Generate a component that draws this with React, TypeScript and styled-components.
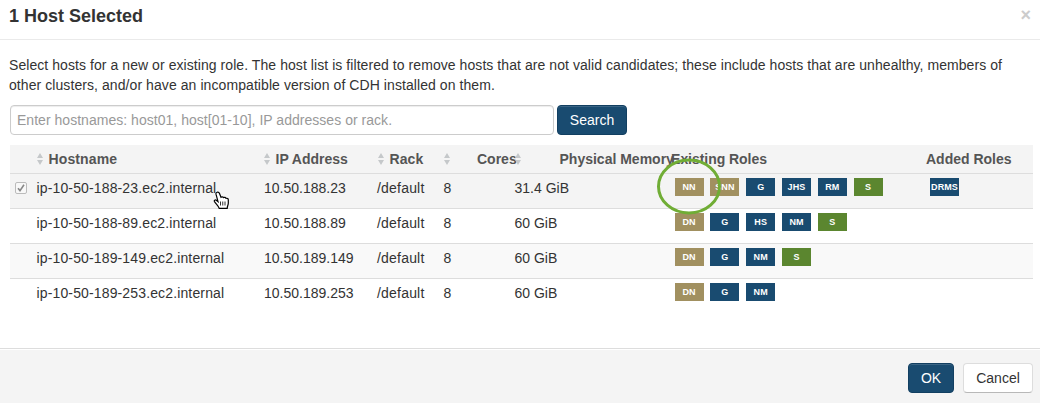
import React from "react";
import styled, { createGlobalStyle, css } from "styled-components";

const GlobalStyle = createGlobalStyle`
  * { box-sizing: border-box; }
  body {
    margin: 0;
    background: #fff;
    color: #333;
    font: 14px/20px "Liberation Sans", Arial, sans-serif;
  }
`;

const Modal = styled.div`
  display: flex;
  flex-direction: column;
  width: 1040px;
  height: 403px;
  overflow: hidden;
  position: relative;
`;

const Header = styled.header`
  display: flex;
  justify-content: space-between;
  height: 40px;
  padding: 6px 9px 0 9px;
  border-bottom: 1px solid #eaeaea;
`;

const Title = styled.h3`
  margin: 0;
  font-size: 18px;
  line-height: 20px;
  letter-spacing: 0;
`;

const Close = styled.button`
  height: 18px;
  padding: 0;
  border: 0;
  background: none;
  color: #ccc;
  font: bold 18px/18px "Liberation Sans", Arial, sans-serif;
`;

const Body = styled.main`
  flex: 1;
  padding: 15px 7px 0 10px;
`;

const Intro = styled.p`
  margin: 0 0 10px -1px;
  white-space: nowrap;
`;

const Line = styled.span<{ $spacing: number }>`
  display: block;
  letter-spacing: ${(p) => p.$spacing}px;
`;

const SearchRow = styled.div`
  display: flex;
  gap: 3px;
  height: 30px;
  margin-bottom: 10px;
`;

const SearchInput = styled.input`
  width: 544px;
  height: 30px;
  padding: 0 6px;
  border: 1px solid #ccc;
  border-radius: 4px;
  box-shadow: inset 0 1px 1px rgba(0, 0, 0, 0.075);
  font: 14px/20px "Liberation Sans", Arial, sans-serif;
  letter-spacing: 0.03px;
  &::placeholder { color: #999; opacity: 1; }
`;

const Button = styled.button<{ $primary?: boolean; $width: number }>`
  width: ${(p) => p.$width}px;
  height: 30px;
  padding: 0;
  border-radius: 4px;
  font: 14px/20px "Liberation Sans", Arial, sans-serif;
  letter-spacing: 0;
  ${(p) =>
    p.$primary
      ? css`
          color: #fff;
          background: #194b70;
          border: 1px solid #123f61;
          box-shadow: inset 0 1px 0 rgba(255, 255, 255, 0.15);
        `
      : css`
          color: #333;
          background: #fff;
          border: 1px solid #ddd;
          border-bottom-color: #b8b8b8;
        `}
`;

const columns = "26px 228px 113px 66px 71px 160.6px 255.4px 1fr";

const HeadRow = styled.div`
  display: grid;
  grid-template-columns: ${columns};
  height: 29px;
  background: #f4f4f4;
  border-bottom: 1px solid #ddd;
`;

const HeadCell = styled.div<{ $indent?: number; $spacing?: number }>`
  display: flex;
  align-items: center;
  gap: 5.5px;
  min-width: 0;
  padding-left: ${(p) => p.$indent ?? 0}px;
  color: #555;
  font-weight: bold;
  white-space: nowrap;
  letter-spacing: ${(p) => p.$spacing ?? 0.1}px;
`;

const HeadLabel = styled.span<{ $offset?: number }>`
  margin-left: ${(p) => p.$offset ?? 0}px;
`;

const Row = styled.div<{ $bg: string }>`
  display: grid;
  grid-template-columns: ${columns};
  height: 35px;
  padding-top: 4px;
  background: ${(p) => p.$bg};
  &:not(:last-child) { border-bottom: 1px solid #ddd; }
`;

const Cell = styled.div<{ $spacing?: number; $indent?: number }>`
  padding-left: ${(p) => p.$indent ?? 0}px;
  white-space: nowrap;
  letter-spacing: ${(p) => p.$spacing ?? 0}px;
`;

const CheckCell = styled.div`
  padding: 4px 0 0 5px;
  line-height: 0;
`;

const Roles = styled.div`
  display: flex;
  gap: 6.8px;
`;

const tones = { tan: "#a19060", blue: "#194b70", green: "#5b862f" };
type Tone = keyof typeof tones;

const Badge = styled.span<{ $tone: Tone }>`
  width: 29px;
  height: 18px;
  color: #fff;
  background: ${(p) => tones[p.$tone]};
  font-size: 9px;
  font-weight: bold;
  line-height: 18px;
  text-align: center;
  letter-spacing: 0.1px;
`;

const Footer = styled.footer`
  display: flex;
  justify-content: flex-end;
  gap: 9px;
  height: 55px;
  padding: 14px 7px 0;
  background: #f4f4f4;
  border-top: 1px solid #ddd;
  box-shadow: inset 0 1px 0 #fff;
`;

const Ring = styled.svg`
  position: absolute;
  left: 656px;
  top: 156px;
`;

const Pointer = styled.svg`
  position: absolute;
  left: 213px;
  top: 191px;
`;

const SortGlyph = styled.svg`
  flex: none;
  width: 6px;
  height: 12px;
  fill: #c5c8ca;
`;

const SortIcon = () => (
  <SortGlyph viewBox="0 0 6 12">
    <path d="M3 0 6 5H0ZM0 7H6L3 12Z" />
  </SortGlyph>
);

const Checked = () => (
  <svg width="12" height="12" viewBox="0 0 12 12" fill="none">
    <rect x=".5" y=".5" width="11" height="11" rx="1.5" fill="#f8f8f8" stroke="#bbb" />
    <path d="M3 6.2 5 8.6 9 2.8" stroke="#888" strokeWidth="1.6" />
  </svg>
);

type Host = { name: string; ip: string; memory: string; roles: [string, Tone][]; added?: string; bg: string };

const hosts: Host[] = [
  { name: "ip-10-50-188-23.ec2.internal", ip: "10.50.188.23", memory: "31.4 GiB", bg: "#f4f4f4", added: "DRMS",
    roles: [["NN", "tan"], ["SNN", "tan"], ["G", "blue"], ["JHS", "blue"], ["RM", "blue"], ["S", "green"]] },
  { name: "ip-10-50-188-89.ec2.internal", ip: "10.50.188.89", memory: "60 GiB", bg: "#fff",
    roles: [["DN", "tan"], ["G", "blue"], ["HS", "blue"], ["NM", "blue"], ["S", "green"]] },
  { name: "ip-10-50-189-149.ec2.internal", ip: "10.50.189.149", memory: "60 GiB", bg: "#f9f9f9",
    roles: [["DN", "tan"], ["G", "blue"], ["NM", "blue"], ["S", "green"]] },
  { name: "ip-10-50-189-253.ec2.internal", ip: "10.50.189.253", memory: "60 GiB", bg: "#fff",
    roles: [["DN", "tan"], ["G", "blue"], ["NM", "blue"]] },
];

export default function App() {
  return (
    <Modal>
      <GlobalStyle />
      <Header>
        <Title>1 Host Selected</Title>
        <Close aria-label="Close">×</Close>
      </Header>
      <Body>
        <Intro>
          <Line $spacing={0.065}>
            Select hosts for a new or existing role. The host list is filtered to remove hosts that are not valid candidates; these include hosts that are unhealthy, members of
          </Line>
          <Line $spacing={0.075}>other clusters, and/or have an incompatible version of CDH installed on them.</Line>
        </Intro>
        <SearchRow>
          <SearchInput placeholder="Enter hostnames: host01, host[01-10], IP addresses or rack." />
          <Button $primary $width={70}>Search</Button>
        </SearchRow>
        <HeadRow>
          <HeadCell />
          <HeadCell $indent={1} $spacing={0.12}><SortIcon /><HeadLabel>Hostname</HeadLabel></HeadCell>
          <HeadCell $indent={0} $spacing={0}><SortIcon /><HeadLabel>IP Address</HeadLabel></HeadCell>
          <HeadCell $indent={1}><SortIcon /><HeadLabel>Rack</HeadLabel></HeadCell>
          <HeadCell $indent={1} $spacing={0}><SortIcon /><HeadLabel $offset={21.5}>Cores</HeadLabel></HeadCell>
          <HeadCell $indent={1} $spacing={0}><SortIcon /><HeadLabel $offset={33}>Physical Memory</HeadLabel></HeadCell>
          <HeadCell $spacing={-0.05}><HeadLabel $offset={-3.5}>Existing Roles</HeadLabel></HeadCell>
          <HeadCell $spacing={0}><HeadLabel $offset={-4}>Added Roles</HeadLabel></HeadCell>
        </HeadRow>
        {hosts.map((h) => (
          <Row key={h.name} $bg={h.bg}>
            <CheckCell>{h.added && <Checked />}</CheckCell>
            <Cell $spacing={0.14} $indent={0.5}>{h.name}</Cell>
            <Cell>{h.ip}</Cell>
            <Cell $spacing={0.2}>/default</Cell>
            <Cell $indent={0.5}>8</Cell>
            <Cell $indent={0.5}>{h.memory}</Cell>
            <Roles>
              {h.roles.map(([label, tone]) => <Badge key={label} $tone={tone}>{label}</Badge>)}
            </Roles>
            <Roles>{h.added && <Badge $tone="blue">{h.added}</Badge>}</Roles>
          </Row>
        ))}
      </Body>
      <Footer>
        <Button $primary $width={46}>OK</Button>
        <Button $width={70}>Cancel</Button>
      </Footer>
      <Ring width="66" height="60" viewBox="0 0 66 60" fill="none">
        <ellipse cx="33" cy="30.5" rx="30.5" ry="26.5" stroke="#70ad35" strokeWidth="3" />
      </Ring>
      <Pointer width="17" height="19" viewBox="0 0 17 19">
        <path
          d="M4 1.2C5 .8 6 1.3 6.4 2.3L8 6.3C9 5.6 10 5.8 10.6 6.6 11.5 6 12.6 6.3 13 7.3 14.5 7 15.3 7.8 15.3 9V12C15.3 14 14.3 15 14.2 17.3H6.2C5.5 15 3.4 13.4 1.5 10.6.8 9.3 2.2 8.5 3.3 9.3L5 10.7 3 3.2C2.8 2.2 3 1.5 4 1.2Z"
          fill="#fff" stroke="#000" strokeWidth="1.2"
        />
        <path d="M7.5 10.5V14.5M9.75 10.5V14.5M12 10.5V14.5" stroke="#000" strokeWidth=".8" />
      </Pointer>
    </Modal>
  );
}
